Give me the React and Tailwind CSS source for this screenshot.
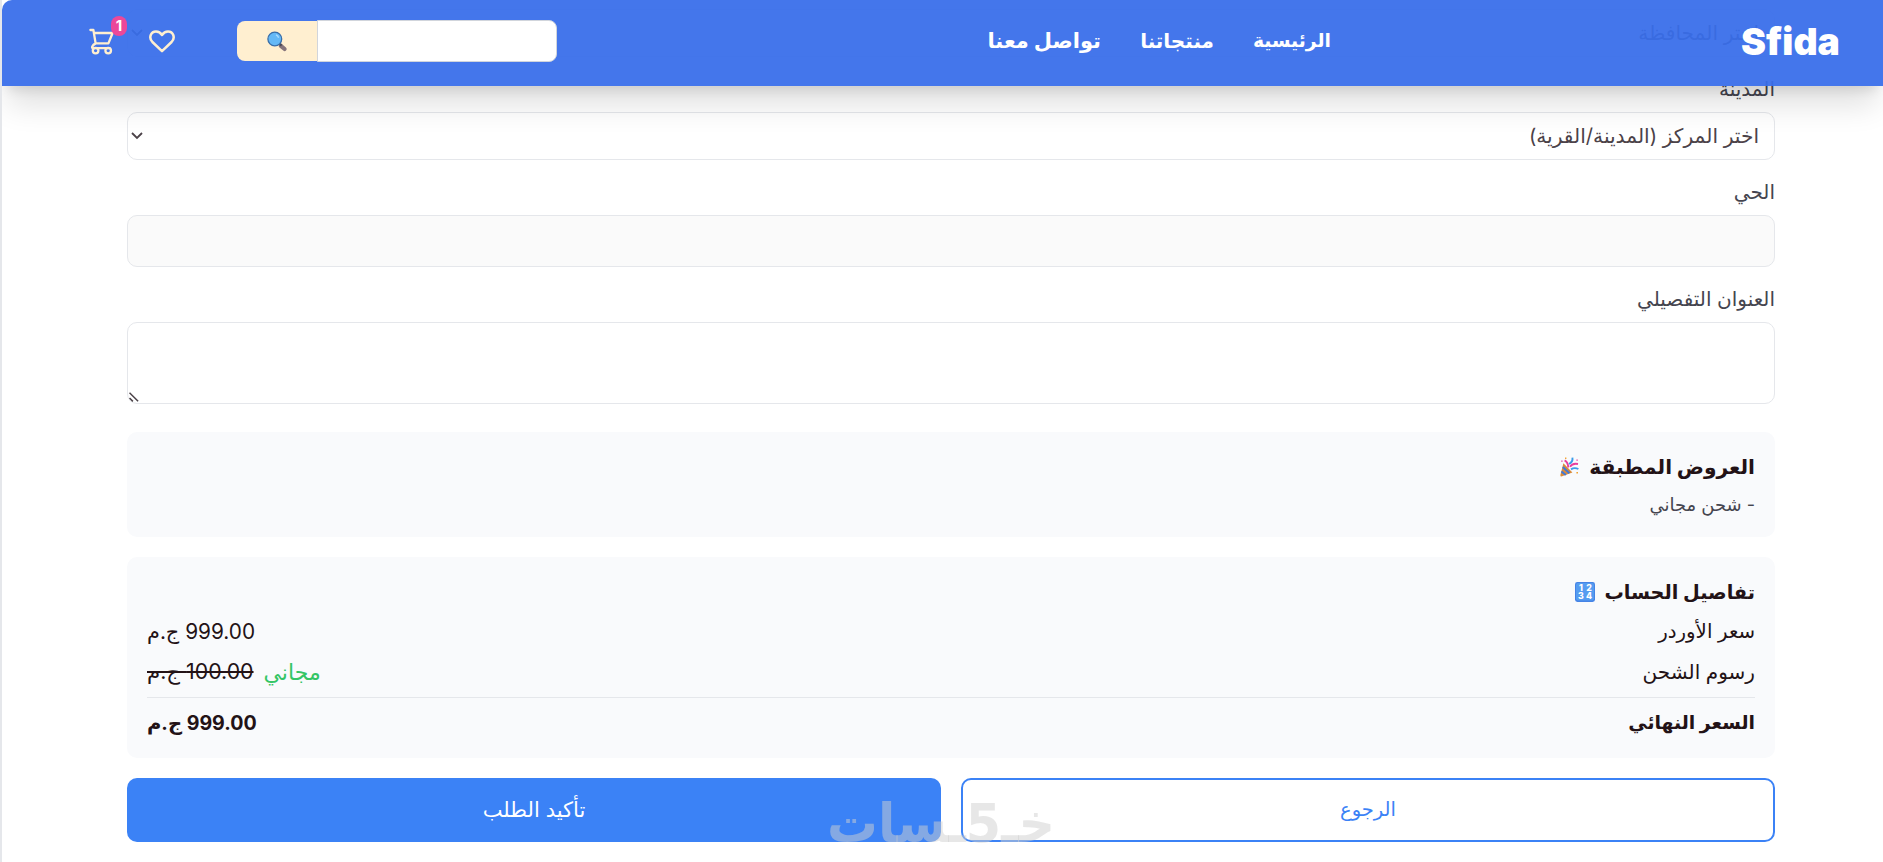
import React, { useState } from "react";

const navLinks = [
  { label: "الرئيسية", className: "w-[77px] text-[18.8px]" },
  { label: "منتجاتنا", className: "w-[73px] text-[20px]" },
  { label: "تواصل معنا", className: "w-[114px] text-[21px]" },
];

const CartIcon = () => (
  <svg
    width="26"
    height="27"
    viewBox="0 0 26 27"
    fill="none"
    stroke="#ffefd0"
    strokeWidth="2.3"
    strokeLinecap="round"
    strokeLinejoin="round"
  >
    <path d="M1.4 2h3l2.2 13.4M5 5h18.6l-4.2 10.4H6.8C3 17.2 2.2 20 4 20.2h16.6" />
    <circle cx="6.6" cy="22.6" r="2.8" />
    <circle cx="19.2" cy="22.6" r="2.8" />
  </svg>
);

const HeartIcon = () => (
  <svg
    width="26"
    height="23"
    viewBox="0 0 26 23"
    fill="none"
    stroke="#ffefd0"
    strokeWidth="2.5"
    strokeLinejoin="round"
  >
    <path d="M13 21.2 3.4 12C-.8 7.6 2 1.4 7 1.4c2.8 0 4.6 1.4 6 3.6 1.4-2.2 3.2-3.6 6-3.6 5 0 7.8 6.2 3.6 10.6z" />
  </svg>
);

const SearchIcon = () => (
  <svg width="21" height="21" viewBox="0 0 21 21">
    <path d="m13.8 14.8 3.8 3.2" stroke="#86747b" strokeWidth="4.2" strokeLinecap="round" />
    <path d="m12.2 12.4 2.4 2.2" stroke="#4d4a55" strokeWidth="2.4" />
    <circle cx="7.8" cy="8" r="6.9" fill="#64b8f6" stroke="#3a6ea8" strokeWidth="1.3" />
    <path d="M9 3.8a4.6 4.6 0 0 1 2.6 3" stroke="#a9dcff" strokeWidth="1.4" fill="none" />
  </svg>
);

const PartyIcon = () => (
  <svg width="19" height="20" viewBox="0 0 19 20">
    <path d="M3.4 6.2 12.4 15.6 1.4 19.6Q.2 19.6.4 18z" fill="#d98b3a" />
    <path d="m2.8 10 6.6 6.2M1.4 14.4l4.4 3.6" stroke="#3f78d8" strokeWidth="2" />
    <path d="M4.6 3.4q3.6 2 3.6 7M10 9.8q2.4-4 8-2.8" stroke="#e83f9d" strokeWidth="1.8" fill="none" />
    <path d="M12.4.6q.8 4-3.4 6.4M11 12.4q3.4-2.4 7.4-.4" stroke="#3b9bea" strokeWidth="1.9" fill="none" />
    <path d="M5 .6h1.4V2H5zM16.4 15H18v1.4h-1.6z" fill="#f0a534" />
    <path d="M1.2 3.4h1.4v1.4H1.2zM16.4 2.4h1.4v1.4h-1.4z" fill="#e83f9d" />
  </svg>
);

const NumbersIcon = () => (
  <svg width="20" height="20" viewBox="0 0 20 20">
    <rect width="20" height="20" rx="2.4" fill="#4583e6" />
    <rect x="1" y="1" width="18" height="17.4" rx="2" fill="#559cf0" />
    <g
      fill="#fff"
      fontFamily="Inter, sans-serif"
      fontSize="8.8"
      fontWeight="800"
      textAnchor="middle"
    >
      <text x="6" y="8.6">1</text>
      <text x="14" y="8.6">2</text>
      <text x="6" y="17.2">3</text>
      <text x="14" y="17.2">4</text>
    </g>
  </svg>
);

const Chevron = () => (
  <svg width="12" height="8" viewBox="0 0 12 8" fill="none" stroke="#4b4248" strokeWidth="1.8">
    <path d="m1 1 5 5 5-5" />
  </svg>
);

const SelectBox = ({ placeholder }) => (
  <button
    type="button"
    className="flex h-12 w-full items-center justify-between rounded-[10px] border border-gray-200 bg-white ps-[15px] pe-[3px] text-[20.2px] text-[#4b4248]"
  >
    <span>{placeholder}</span>
    <Chevron />
  </button>
);

const Label = ({ children }) => (
  <label className="block h-[30px] text-[20px] leading-[30px] text-[#45454f]">{children}</label>
);

const Header = () => {
  const [query, setQuery] = useState("");

  return (
    <header className="absolute inset-x-0 top-0 z-10 flex h-[86px] items-center rounded-tl-[10px] bg-[rgba(56,109,234,0.94)] ps-[43px] pe-[86px] pb-[4px] shadow-[0_25px_31px_-6px_rgba(0,0,0,0.12),0_10px_12px_-6px_rgba(0,0,0,0.1)]">
      <h1 className="w-[97px] pt-[2px] text-[37.5px] leading-none font-black text-white">Sfida</h1>
      <nav className="ms-[412px] flex items-center gap-[40px] font-bold text-white">
        {navLinks.map((link) => (
          <a key={link.label} href="#" className={`${link.className} whitespace-nowrap`}>
            {link.label}
          </a>
        ))}
      </nav>
      <div className="ms-auto flex items-center">
        <input
          value={query}
          onChange={(e) => setQuery(e.target.value)}
          className="h-[42px] w-[240px] rounded-s-[8px] border border-gray-300 bg-white px-3 outline-none"
        />
        <button
          type="button"
          className="flex h-10 w-20 items-center justify-center rounded-e-[8px] bg-[#ffefd0]"
        >
          <SearchIcon />
        </button>
      </div>
      <div className="ms-[62px] flex items-center gap-[34px]">
        <HeartIcon />
        <div className="relative me-px">
          <CartIcon />
          <span className="absolute -top-[12px] left-[22px] flex h-5 w-4 items-center justify-center rounded-full bg-[#ec4899] text-[15px] leading-none font-bold text-white">
            1
          </span>
        </div>
      </div>
    </header>
  );
};

const App = () => {
  const [address, setAddress] = useState("");

  return (
    <div
      dir="rtl"
      className="relative h-[862px] w-full overflow-hidden border-l-2 border-gray-200 bg-white font-['Inter','DejaVu_Sans',sans-serif] text-[#231216]"
    >
      <Header />

      <main className="ms-[108px] me-[125px] pt-[9px]">
        <SelectBox placeholder="اختر المحافظة" />
        <div className="mt-[17px] pb-[8px]">
          <Label>المدينة</Label>
        </div>
        <SelectBox placeholder="اختر المركز (المدينة/القرية)" />

        <div className="mt-[17px] pb-[8px]">
          <Label>الحي</Label>
        </div>
        <input
          disabled
          className="block h-[52px] w-full rounded-[10px] border border-gray-200 bg-[#fafafa]"
        />

        <div className="mt-[17px] pb-[8px]">
          <Label>العنوان التفصيلي</Label>
        </div>
        <div className="relative">
          <textarea
            value={address}
            onChange={(e) => setAddress(e.target.value)}
            className="block h-[82px] w-full resize-none rounded-[10px] border border-gray-200 bg-white outline-none"
          />
          <svg
            className="absolute bottom-[2px] left-[2px]"
            width="10"
            height="10"
            viewBox="0 0 10 10"
            stroke="#4b4248"
            strokeWidth="1.5"
          >
            <path d="m.5 .8 8.6 8.4M.5 6l3.4 3.4" />
          </svg>
        </div>

        {/* Applied offers */}
        <section className="mt-[28px] h-[105px] rounded-[10px] bg-[#f9fafc] px-5 pt-[20px]">
          <h3 className="flex h-[30px] items-center gap-[10px] text-[20.2px] font-bold">
            العروض المطبقة <PartyIcon />
          </h3>
          <p className="mt-[9px] text-[18px] leading-[28px] text-[#45454f]">- شحن مجاني</p>
        </section>

        {/* Invoice summary */}
        <section className="mt-5 h-[201px] rounded-[10px] bg-[#f9fafc] px-5 pt-[20px]">
          <h3 className="flex h-[30px] items-center gap-[9px] text-[19.3px] font-bold">
            تفاصيل الحساب <NumbersIcon />
          </h3>
          <div className="mt-[10px] flex h-[30px] items-center justify-between">
            <span className="text-[19.8px]">سعر الأوردر</span>
            <span className="text-[20.8px]">999.00 ج.م</span>
          </div>
          <div className="mt-[10px] flex h-[30px] items-center justify-between">
            <span className="text-[20px]">رسوم الشحن</span>
            <div className="flex items-center gap-[10px]">
              <span className="text-[22px] text-[#34c565]">مجاني</span>
              <span className="text-[21.3px] line-through">100.00 ج.م</span>
            </div>
          </div>
          <div className="mt-[10px] flex h-[52px] items-center justify-between border-t border-gray-200 font-bold">
            <span className="text-[18.9px]">السعر النهائي</span>
            <span className="text-[19.6px]">999.00 ج.م</span>
          </div>
        </section>

        <div className="mt-5 grid grid-cols-2 gap-5">
          <button
            type="button"
            className="h-16 rounded-[10px] border-2 border-[#3b82f6] bg-white text-[19.5px] text-[#3b82f6]"
          >
            الرجوع
          </button>
          <button type="button" className="h-16 rounded-[10px] bg-[#3b82f6] text-[21px] text-white">
            تأكيد الطلب
          </button>
        </div>
      </main>

      {/* Watermark */}
      <svg
        className="pointer-events-none absolute top-[780px] left-[822px] overflow-visible"
        width="234"
        height="80"
        viewBox="0 0 234 80"
      >
        <text
          x="231"
          y="62"
          direction="rtl"
          textLength="228"
          lengthAdjust="spacingAndGlyphs"
          fontFamily="DejaVu Sans, sans-serif"
          fontWeight="700"
          fontSize="54"
          fill="rgba(208,208,208,0.5)"
        >
          خـ5ـسات
        </text>
      </svg>
    </div>
  );
};

export default App;
